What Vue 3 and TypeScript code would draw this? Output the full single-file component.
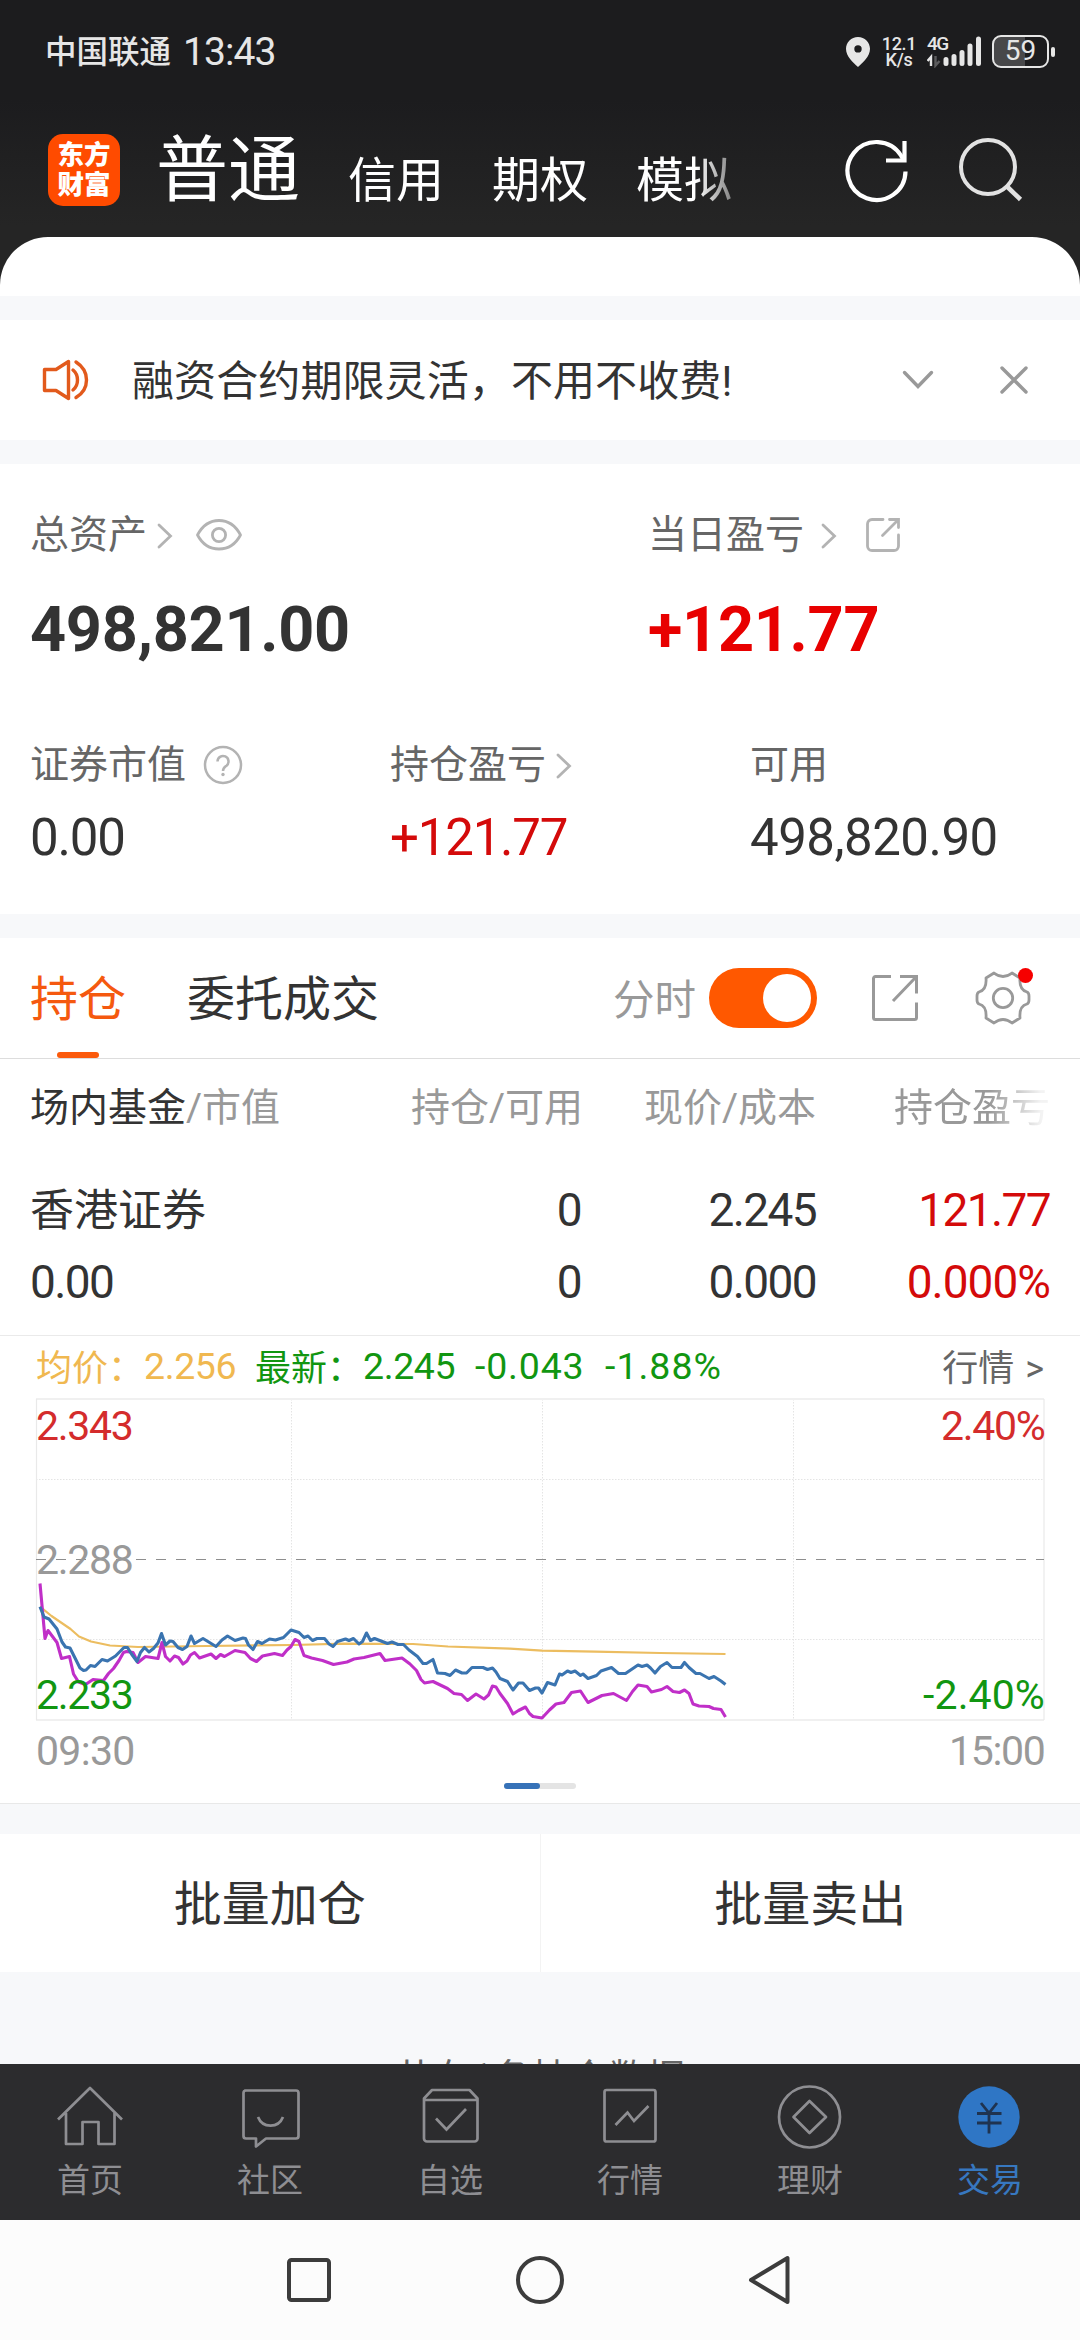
<script setup lang="ts">
type Point = [number, number]

interface NavItem {
  key: string
  label: string
}

const accountTabs: string[] = ['信用', '期权', '模拟']

const navItems: NavItem[] = [
  { key: 'home', label: '首页' },
  { key: 'community', label: '社区' },
  { key: 'watchlist', label: '自选' },
  { key: 'market', label: '行情' },
  { key: 'wealth', label: '理财' },
  { key: 'trade', label: '交易' },
]

const averageLine: Point[] = [
  [40, 226.7], [51.5, 236], [70.5, 249], [79, 256.5], [91, 261.5], [110, 265.5], [138, 267], [206.5, 266],
  [293, 265], [344, 263.7], [413, 264], [448, 266.5], [510, 268.7], [542, 270.7], [595, 271.7], [660, 273], [725.5, 274],
]

const indexLine: Point[] = [
  [40, 203.5], [45, 258.5], [48, 250.5], [57, 262.5], [61.5, 278.5], [69.5, 276.5], [73.5, 294], [78.5, 302],
  [85.5, 304.5], [93, 299.5], [103.5, 300.5], [108.5, 293.5], [113.5, 288.5], [119, 280.5], [123.5, 272.5],
  [126.5, 271.5], [133, 272.5], [138, 282.5], [145.5, 276.5], [158, 278.5], [162, 262.5], [165.5, 276.5],
  [170, 281], [174.5, 276], [178.5, 277.5], [183, 284], [187, 281], [190.5, 275], [194.5, 272.5], [199.5, 278],
  [211, 274], [216, 278.5], [220.5, 274.5], [224.5, 276.5], [235, 270.5], [245, 272.5], [250.5, 278.5],
  [256.5, 281.5], [262.5, 276], [274.5, 273.5], [282.5, 275.5], [287, 270], [291, 266.5], [295, 259.5],
  [299, 261.5], [304, 275.5], [311.5, 278], [322.5, 280.5], [333.5, 284.5], [347, 282], [354, 279],
  [364, 277.5], [372, 275.5], [380, 273.5], [385, 280.5], [402, 278], [410, 284], [416.5, 290.5], [421, 299.5],
  [424.5, 303], [433, 301.5], [447.5, 308.5], [454, 313.5], [461.5, 314.5], [467.5, 320.5], [476, 314],
  [484, 319], [488.5, 315], [492.5, 306], [496, 307], [500, 313.5], [507.5, 323.5], [513, 334], [518.5, 330.5],
  [525.5, 327], [529.5, 333.5], [533, 336.5], [542, 338], [549.5, 330], [556, 324], [564, 322.5],
  [571.5, 312.5], [580.5, 311], [588, 322.5], [602, 315.5], [613.5, 313.5], [626.5, 320.5], [632.5, 311.5],
  [638, 305], [647, 306.5], [651.5, 312], [661.5, 309.5], [667, 306.5], [673, 311.5], [679.5, 312.5],
  [684.5, 310], [689, 313.5], [693, 324], [699, 326], [709, 326.5], [713.5, 328.5], [721, 329.5], [725.5, 337],
]

const priceLine: Point[] = [
  [40, 226.7], [44, 237], [49, 239], [57, 249], [62, 262], [65.5, 267], [70, 268], [75, 278], [80, 288],
  [83.5, 290.5], [86, 290], [90.5, 285.5], [95, 286.5], [102, 279.5], [107.5, 281], [115.5, 276], [124, 267.5],
  [127.5, 267.5], [131.5, 274], [137, 281.5], [140.5, 272.5], [144.5, 267.5], [149, 272], [153.5, 268.5],
  [158, 263], [161.5, 253.5], [165.5, 265], [170, 261], [173, 261.5], [178, 267.5], [182.5, 269.5],
  [187, 266.5], [191, 256], [194.5, 263.5], [203, 258.5], [216, 266.5], [222, 260], [227.5, 256],
  [235, 260.5], [243, 258], [245.5, 258.5], [248.5, 265], [253, 269.5], [257.5, 261.5], [262, 263.5],
  [269.5, 259], [275.5, 260], [283.5, 257.5], [291, 250], [299, 252.5], [304, 257.5], [308, 256],
  [312.5, 260.5], [317, 258.5], [324.5, 258.5], [329, 264], [333, 266.5], [337.5, 261.5], [345.5, 259],
  [349, 260.5], [353.5, 258.5], [359, 264], [362.5, 261.5], [366.5, 253], [370.5, 260.5], [374.5, 258.5],
  [387.5, 263.5], [392, 262], [398, 264.5], [403.5, 264.5], [409, 270], [417.5, 276.5], [423, 283.5],
  [426.5, 283.5], [433, 279.5], [437.5, 293], [445, 293.5], [450, 295.5], [455.5, 290], [462, 293],
  [466.5, 293], [472, 287.5], [483, 287.5], [487.5, 289.5], [492.5, 288], [496, 292], [500, 298.5],
  [507.5, 301.5], [513, 310], [518.5, 303], [523, 303], [529.5, 310.5], [535.5, 308], [538.5, 308],
  [542, 313], [547.5, 302.5], [555, 305], [559.5, 294], [562, 295], [567.5, 291], [571, 292.5], [575, 291],
  [580.5, 295.5], [583, 294], [588, 298.5], [596.5, 295.5], [601, 291], [611.5, 287.5], [618.5, 293.5],
  [625.5, 293.5], [638, 285], [642, 286.5], [647, 285], [650.5, 288], [655, 293], [660.5, 286.5],
  [667, 282.5], [672, 287.5], [681, 287.5], [684.5, 282.5], [689, 287.5], [696, 293.5], [700, 293.5],
  [709, 298.5], [714, 296.5], [721, 301], [725.5, 304.5],
]

const toPoints = (line: Point[]): string => line.map((p) => p.join(',')).join(' ')
</script>

<template>
  <div class="screen">
    <header class="top">
      <div class="status">
        <span class="carrier">中国联通</span>
        <span class="clock">13:43</span>
        <div class="status-right">
          <svg class="pin" width="24" height="30" viewBox="0 0 24 30">
            <path fill-rule="evenodd" fill="#e6e6e6" d="M12 0C5.200 0 0 5.200 0 11.800 0 19.500 7 25.500 12 30c5-4.500 12-10.500 12-18.200C24 5.200 18.800 0 12 0Zm0 8.200a3.700 3.700 0 1 1 0 7.400 3.700 3.700 0 0 1 0-7.400Z" />
          </svg>
          <div class="speed"><span>12.1</span><span>K/s</span></div>
          <div class="signal">
            <span class="net">4G</span>
            <svg width="55" height="32" viewBox="0 0 55 32">
              <path d="M4 30V21L0.500 25" fill="none" stroke="#e6e6e6" stroke-width="2.400" />
              <path d="M8.500 20v9.500L12.500 25" fill="none" stroke="#5c5c5e" stroke-width="2.400" />
              <g stroke="#e6e6e6" stroke-width="5" stroke-linecap="round">
                <path d="M19 23.500v4M27 20.500v7M35 16.500v11M43 10v17.500M51.500 3v24.500" />
              </g>
            </svg>
          </div>
          <div class="battery"><div class="cell">59</div><i></i></div>
        </div>
      </div>
      <div class="title-row">
        <div class="logo"><span>东方</span><span>财富</span></div>
        <div class="account-tabs">
          <span class="current">普通</span>
          <span v-for="tab in accountTabs" :key="tab">{{ tab }}</span>
        </div>
        <svg class="refresh" width="66" height="66" viewBox="0 0 66 66" fill="none" stroke="#fff" stroke-width="4.200">
          <path d="M60.500 34.500A29 29 0 1 1 56 18.500L58.500 23" />
          <path d="M59.500 4v19.500H41" />
        </svg>
        <svg class="search" width="66" height="66" viewBox="0 0 66 66" fill="none" stroke="#e2e2e2" stroke-width="4">
          <circle cx="30" cy="30" r="27" />
          <path d="M49 49.500 62.500 62.500" stroke-width="4.600" />
        </svg>
      </div>
    </header>
    <div class="sheet-top"><div></div></div>

    <section class="notice">
      <svg width="48" height="44" viewBox="0 0 48 44" fill="none" stroke="#e25a1c" stroke-width="3.400" stroke-linejoin="round" stroke-linecap="round">
        <path d="M2.500 11.500H14L26.500 3.500v37L14 32.500H2.500Z" />
        <path d="M31 12c6 5 6 15 0 20M34 4c14 9 14 27 0 35.500" />
      </svg>
      <span>融资合约期限灵活，不用不收费!</span>
      <svg class="fold" width="34" height="22" viewBox="0 0 34 22" fill="none" stroke="#999" stroke-width="3.400" stroke-linecap="round">
        <path d="M3.500 3.500 17 17.500 30.500 3.500" />
      </svg>
      <svg class="close" width="30" height="30" viewBox="0 0 30 30" fill="none" stroke="#999" stroke-width="3.400" stroke-linecap="round">
        <path d="M3 3 27 27M27 3 3 27" />
      </svg>
    </section>

    <section class="assets">
      <div class="asset-main">
        <div class="col-total">
          <div class="label">
            <span>总资产</span>
            <svg class="chev" width="16" height="26" viewBox="0 0 16 26"><path d="M2 2 13.500 13 2 24" /></svg>
            <svg class="eye" width="48" height="34" viewBox="0 0 48 34" fill="none" stroke="#b3b3b3" stroke-width="2.800" stroke-linejoin="round">
              <path d="M2.500 17C7 8.500 14.500 2.500 24 2.500S41 8.500 45.500 17C41 25.500 33.500 31 24 31S7 25.500 2.500 17Z" />
              <circle cx="24" cy="17" r="6.600" />
            </svg>
          </div>
          <strong>498,821.00</strong>
        </div>
        <div class="col-day">
          <div class="label">
            <span>当日盈亏</span>
            <svg class="chev wide" width="16" height="26" viewBox="0 0 16 26"><path d="M2 2 13.500 13 2 24" /></svg>
            <svg class="share" width="36" height="36" viewBox="0 0 36 36" fill="none" stroke="#b3b3b3" stroke-width="2.800" stroke-linecap="round">
              <path d="M18 2.500H7A4.500 4.500 0 0 0 2.500 7V29A4.500 4.500 0 0 0 7 33.500H29A4.500 4.500 0 0 0 33.500 29V18" />
              <path d="M24.500 2.500H33.500V10.500M32.500 3.500 17.500 18.500" />
            </svg>
          </div>
          <strong>+121.77</strong>
        </div>
      </div>
      <div class="asset-sub">
        <div>
          <div class="label">
            <span>证券市值</span>
            <svg class="help" width="40" height="40" viewBox="0 0 40 40" fill="none" stroke="#b3b3b3" stroke-width="2.500">
              <circle cx="20" cy="20" r="18" />
              <path d="M14.500 16.500a5.500 5.500 0 1 1 9 4.200C21.500 22.200 20 23 20 26" />
              <circle cx="20" cy="29.500" r="1.700" fill="#b3b3b3" stroke="none" />
            </svg>
          </div>
          <b>0.00</b>
        </div>
        <div>
          <div class="label">
            <span>持仓盈亏</span>
            <svg class="chev" width="16" height="26" viewBox="0 0 16 26"><path d="M2 2 13.500 13 2 24" /></svg>
          </div>
          <b class="up">+121.77</b>
        </div>
        <div>
          <div class="label"><span>可用</span></div>
          <b class="available">498,820.90</b>
        </div>
      </div>
    </section>

    <section class="holdings">
      <div class="tabs">
        <div class="tab active">持仓</div>
        <div class="tab">委托成交</div>
        <span class="minute">分时</span>
        <div class="switch"><i></i></div>
        <svg class="export" width="48" height="48" viewBox="0 0 48 48" fill="none" stroke="#999" stroke-width="3">
          <path d="M20 2.500H4.500A2 2 0 0 0 2.500 4.500V43.500A2 2 0 0 0 4.500 45.500H43.500A2 2 0 0 0 45.500 43.500V28.500" />
          <path d="M29 2.500H45.500V19.500M45 3 22 27" />
        </svg>
        <div class="gear">
          <svg width="56" height="56" viewBox="-28 -28 56 56" fill="none" stroke="#999" stroke-width="2.800" stroke-linejoin="round">
            <path d="M-9-25Q0-18 9-25L17-20Q16-8 24-6Q26-5 26-2V2Q26 5 24 6Q16 8 17 20L9 25Q0 18-9 25L-17 20Q-16 8-24 6Q-26 5-26 2V-2Q-26-5-24-6Q-16-8-17-20Z" />
            <circle r="9.700" />
          </svg>
          <i></i>
        </div>
      </div>

      <div class="row head">
        <span><em>场内基金</em>/市值</span>
        <span>持仓/可用</span>
        <span>现价/成本</span>
        <span class="fade">持仓盈亏</span>
      </div>
      <div class="row first">
        <span class="name">香港证券</span>
        <span>0</span>
        <span>2.245</span>
        <span class="up">121.77</span>
      </div>
      <div class="row second">
        <span>0.00</span>
        <span>0</span>
        <span>0.000</span>
        <span class="up percent">0.000%</span>
      </div>
    </section>

    <section class="chart">
      <div class="legend">
        <span class="avg">均价：</span><span class="avg num v1">2.256</span>
        <span class="last">最新：</span><span class="last num v2">2.245</span>
        <span class="last num v3">-0.043</span>
        <span class="last num v4">-1.88%</span>
        <span class="more">行情 &gt;</span>
      </div>
      <svg class="plot" width="1080" height="390" viewBox="0 13 1080 390">
        <g fill="none" stroke="#e4e4e4" stroke-width="1" stroke-dasharray="1.500 1.500">
          <path d="M36 99.500H1044M36 259.500H1044M291.500 19V340M542.500 19V340M793.500 19V340" />
        </g>
        <path d="M36 19H1044M36 340H1044" stroke="#f0f0f0" stroke-width="2" />
        <path d="M36.500 19V340M1044 19V340" stroke="#e9e9e9" stroke-width="1.200" />
        <path d="M36 179.500H1044" stroke="#8e8e8e" stroke-width="1" stroke-dasharray="10 10" />
        <g fill="none" stroke-linejoin="round">
          <polyline :points="toPoints(averageLine)" stroke="#ecbd60" stroke-width="2.200" />
          <polyline :points="toPoints(indexLine)" stroke="#c02fc8" stroke-width="3.100" />
          <polyline :points="toPoints(priceLine)" stroke="#3a74b0" stroke-width="3.100" />
        </g>
        <g class="axis">
          <text x="36" y="60" class="red">2.343</text>
          <text x="36" y="194" class="grey">2.288</text>
          <text x="36" y="329" class="green">2.233</text>
          <text x="1044.500" y="60" class="red end">2.40%</text>
          <text x="1045" y="329" class="green end low">-2.40%</text>
          <text x="36" y="385" class="grey open">09:30</text>
          <text x="1044.500" y="385" class="grey end">15:00</text>
        </g>
      </svg>
      <div class="pager"><i></i><i></i></div>
    </section>

    <section class="batch">
      <button>批量加仓</button>
      <button>批量卖出</button>
    </section>
    <div class="summary">共有1条持仓数据</div>

    <nav class="nav">
      <div v-for="item in navItems" :key="item.key" class="nav-item" :class="{ on: item.key === 'trade' }">
        <svg width="72" height="72" viewBox="0 0 72 72" fill="none" stroke="#8e8e92" stroke-width="2.700">
          <path v-if="item.key === 'home'" d="M4 39.500 36 8 68 39.500M12 33V64H28.500V42H44.500V64H60.500V33" stroke-linejoin="round" />
          <template v-else-if="item.key === 'community'">
            <path d="M11 10.500H62A2.500 2.500 0 0 1 64.500 13V56A2.500 2.500 0 0 1 62 58.500H32L22 66.500V58.500H12A2.500 2.500 0 0 1 9.500 56V13A2.500 2.500 0 0 1 12 10.500Z" stroke-linejoin="round" />
            <path d="M24 37C28.500 48.500 44.500 48.500 49 37" />
          </template>
          <template v-else-if="item.key === 'watchlist'">
            <path d="M10 18.500 18 10H55.500L63.500 18.500V58.500A3 3 0 0 1 60.500 61.500H13A3 3 0 0 1 10 58.500ZM10 20H63.500" stroke-linejoin="round" />
            <path d="M22 38.500 32.500 49.500 52 29" />
          </template>
          <template v-else-if="item.key === 'market'">
            <rect x="10.500" y="10" width="51" height="51.500" rx="2" />
            <path d="M21.500 45 33.500 32.500 40 41 54.500 26" />
          </template>
          <template v-else-if="item.key === 'wealth'">
            <circle cx="35.500" cy="37" r="30.500" />
            <path d="M35.500 21 52 37 35.500 53 19.500 37Z" stroke-linejoin="round" />
          </template>
          <template v-else>
            <circle cx="35" cy="37" r="30.700" fill="#2f76c5" stroke="none" />
            <path d="M27 23 35 33 43 23M35 33V53.500M23 33.500H47.500M23 43H47.500" stroke="#1f3350" stroke-width="2.800" />
          </template>
        </svg>
        <span>{{ item.label }}</span>
      </div>
    </nav>
    <footer class="system">
      <svg width="50" height="50" viewBox="0 0 50 50"><rect x="5" y="5" width="40" height="40" rx="2.500" /></svg>
      <svg width="50" height="50" viewBox="0 0 50 50"><circle cx="25" cy="25" r="22" /></svg>
      <svg width="50" height="50" viewBox="0 0 50 50"><path d="M41.500 3V47L5 25Z" /></svg>
    </footer>
  </div>
</template>

<style>
body {
  background: #f7f8fa;
}
</style>

<style scoped>
.screen {
  width: 1080px;
  height: 2340px;
  overflow: hidden;
  display: flex;
  flex-direction: column;
  background: #f7f8fa;
  color: #333;
  font-family: Roboto, "Noto Sans CJK SC", sans-serif;
}
.screen > * {
  flex: none;
}
svg {
  display: block;
  flex: none;
}
span,
strong,
b {
  white-space: nowrap;
}
.top {
  height: 237px;
  background: linear-gradient(#1c1c1e 0, #1c1c1e 100px, #252525 225px);
}
.status {
  height: 103px;
  display: flex;
  align-items: center;
  padding: 0 24px 0 45px;
  color: #e6e6e6;
}
.carrier {
  padding-bottom: 5px;
  font-size: 31.500px;
  font-weight: 500;
}
.clock {
  margin-left: 12px;
  font-size: 39px;
  letter-spacing: -0.900px;
}
.status-right {
  margin-left: auto;
  display: flex;
  align-items: center;
}
.speed {
  width: 36px;
  margin-left: 11px;
  display: flex;
  flex-direction: column;
  align-items: center;
  font-size: 18px;
  line-height: 16px;
  font-weight: 500;
  letter-spacing: -0.300px;
}
.signal {
  position: relative;
  margin-left: 10px;
}
.net {
  position: absolute;
  left: 0;
  top: -1px;
  font-size: 19px;
  line-height: 18px;
  font-weight: 500;
  letter-spacing: -1.500px;
}
.battery {
  display: flex;
  align-items: center;
  margin-left: 10px;
}
.cell {
  box-sizing: border-box;
  width: 57px;
  height: 33px;
  border: 2.500px solid #e6e6e6;
  border-radius: 9px;
  background: linear-gradient(90deg, #48484a 59%, transparent 59%);
  text-align: center;
  font-size: 28px;
  line-height: 28px;
}
.battery i {
  width: 4px;
  height: 10px;
  margin: 0 1px 0 2px;
  border-radius: 2px;
  background: #e6e6e6;
}
.title-row {
  height: 134px;
  display: flex;
  align-items: center;
  padding-left: 48px;
}
.logo {
  width: 72px;
  height: 72px;
  border-radius: 15px;
  background: #ff4b00;
  color: #fff;
  display: flex;
  flex-direction: column;
  align-items: center;
  justify-content: center;
  font-size: 26.500px;
  line-height: 30px;
  font-weight: 900;
}
.account-tabs {
  align-self: flex-start;
  width: 582px;
  height: 134px;
  margin-left: 36px;
  display: flex;
  align-items: flex-start;
  gap: 48px;
  color: #fff;
  font-size: 48px;
  line-height: 155px;
  -webkit-mask-image: linear-gradient(90deg, #000 540px, rgba(0, 0, 0, 0.450) 575px);
  mask-image: linear-gradient(90deg, #000 540px, rgba(0, 0, 0, 0.450) 575px);
}
.account-tabs .current {
  font-size: 72px;
  line-height: 135px;
}
.refresh {
  margin-left: 107px;
}
.search {
  margin-left: 47px;
}
.sheet-top {
  height: 59px;
  background: #252525;
}
.sheet-top div {
  height: 59px;
  background: #fff;
  border-radius: 48px 48px 0 0;
}
.notice {
  height: 120px;
  margin: 24px 0;
  display: flex;
  align-items: center;
  padding: 0 51px 0 42px;
  background: #fff;
  font-size: 42px;
}
.notice span {
  margin-left: 42px;
  padding-bottom: 5px;
  letter-spacing: 0.100px;
}
.notice .fold {
  margin-left: auto;
}
.notice .close {
  margin-left: 64px;
}
.assets {
  height: 450px;
  background: #fff;
}
.asset-main {
  display: flex;
  height: 247px;
}
.col-total {
  width: 618px;
  padding-left: 30px;
}
.label {
  display: flex;
  align-items: center;
  font-size: 39px;
  line-height: 44px;
  color: #666;
}
.asset-main .label {
  padding-top: 49px;
}
.chev {
  margin: 2px 0 0 10px;
  fill: none;
  stroke: #b3b3b3;
  stroke-width: 2.800;
  stroke-linecap: round;
}
.chev.wide {
  margin-left: 17px;
}
.eye {
  margin-left: 22px;
}
.share {
  margin-left: 28px;
}
strong {
  display: block;
  margin-top: 37px;
  font-size: 63px;
  line-height: 72px;
  font-weight: 700;
  letter-spacing: -0.300px;
}
.col-day strong {
  color: #e80000;
}
.asset-sub {
  display: grid;
  grid-template-columns: repeat(3, 360px);
  padding-left: 30px;
  padding-top: 32px;
}
.help {
  margin-left: 17px;
}
b {
  display: block;
  margin-top: 21px;
  font-size: 51px;
  line-height: 60px;
  font-weight: 400;
  letter-spacing: -1.200px;
}
.available {
  letter-spacing: -0.500px;
}
.up {
  color: #d40a0a;
}
.holdings {
  margin-top: 24px;
  background: #fff;
}
.tabs {
  height: 120px;
  display: flex;
  align-items: center;
  padding-left: 30px;
  border-bottom: 1px solid #ddd;
}
.tab {
  position: relative;
  height: 120px;
  margin-right: 61px;
  font-size: 48px;
  line-height: 123px;
}
.tab.active {
  color: #f5590f;
}
.tab.active::after {
  content: "";
  position: absolute;
  left: 27px;
  bottom: 0;
  width: 42px;
  height: 6px;
  border-radius: 3px;
  background: #fb5a0c;
}
.minute {
  margin-left: 173px;
  padding-bottom: 2px;
  font-size: 41.500px;
  color: #999;
}
.switch {
  box-sizing: border-box;
  width: 108px;
  height: 60px;
  margin-left: 13px;
  padding: 6px;
  border-radius: 30px;
  background: #ff5800;
}
.switch i {
  display: block;
  width: 48px;
  height: 48px;
  margin-left: auto;
  border-radius: 50%;
  background: #fff;
}
.export {
  margin-left: 54px;
}
.gear {
  position: relative;
  margin-left: 56px;
}
.gear i {
  position: absolute;
  right: -2px;
  top: -2px;
  width: 15px;
  height: 15px;
  border-radius: 50%;
  background: #f60000;
}
.row {
  display: grid;
  grid-template-columns: 381px 170px 235px 234px;
  padding: 0 30px;
  text-align: right;
  font-size: 46px;
  letter-spacing: -1.600px;
}
.row > :first-child {
  text-align: left;
}
.head {
  height: 100px;
  line-height: 98px;
  font-size: 39px;
  letter-spacing: 0;
  color: #999;
}
.head em {
  font-style: normal;
  color: #333;
}
.fade {
  -webkit-mask-image: linear-gradient(90deg, #000 74%, rgba(0, 0, 0, 0.120) 96%);
  mask-image: linear-gradient(90deg, #000 74%, rgba(0, 0, 0, 0.120) 96%);
}
.first {
  height: 86px;
  line-height: 102px;
}
.first .name {
  font-size: 44px;
  line-height: 104px;
  letter-spacing: 0;
}
.second {
  height: 90px;
  line-height: 74px;
}
.percent {
  letter-spacing: -1px;
}
.chart {
  height: 467px;
  border-top: 1px solid #eaeaea;
  border-bottom: 1px solid #e8e8e8;
  background: #fff;
}
.legend {
  height: 57px;
  display: flex;
  align-items: center;
  padding: 1px 36px 0;
  box-sizing: border-box;
  font-size: 36px;
}
.num {
  padding-top: 2px;
  font-size: 37.500px;
  letter-spacing: -0.400px;
}
.avg {
  color: #f0b850;
}
.last {
  color: #119611;
}
.v1 {
  width: 111px;
}
.v2 {
  width: 112px;
}
.v3 {
  width: 130px;
  letter-spacing: 0.800px;
}
.v4 {
  letter-spacing: 1px;
}
.more {
  margin-left: auto;
  color: #666;
  word-spacing: 2px;
}
.axis {
  font-size: 41px;
  letter-spacing: -1.300px;
}
.axis .low {
  letter-spacing: 0.100px;
}
.axis .open {
  letter-spacing: -0.700px;
}
.red {
  fill: #d42c2c;
}
.green {
  fill: #119611;
}
.grey {
  fill: #999;
}
.end {
  text-anchor: end;
}
.pager {
  display: flex;
  width: 72px;
  height: 6px;
  margin: 0 auto;
  border-radius: 3px;
  background: #e4e4e4;
}
.pager i:first-child {
  width: 36px;
  border-radius: 3px;
  background: #3672b8;
}
.batch {
  height: 138px;
  margin-top: 30px;
  display: flex;
  background: #fff;
}
.batch button {
  flex: 1;
  border: 0;
  padding: 0;
  background: none;
  font: inherit;
  font-size: 48px;
  line-height: 142px;
  color: #333;
}
.batch button:first-child {
  border-right: 1px solid #f3f3f3;
}
.summary {
  height: 92px;
  overflow: hidden;
  text-align: center;
  font-size: 38px;
  line-height: 213px;
  letter-spacing: 0.400px;
  color: #666;
}
.nav {
  height: 156px;
  display: flex;
  background: #2c2c2e;
}
.nav-item {
  flex: 1;
  display: flex;
  flex-direction: column;
  align-items: center;
  padding-top: 16px;
  font-size: 33px;
  line-height: 40px;
  color: #8e8e92;
}
.nav-item span {
  margin-top: 9px;
}
.nav-item.on {
  color: #3778c0;
}
.system {
  height: 120px;
  display: flex;
  align-items: center;
  justify-content: center;
  gap: 181px;
  background: #fcfcfc;
}
.system svg {
  fill: none;
  stroke: #3c3c3c;
  stroke-width: 4;
  stroke-linejoin: round;
}
</style>
